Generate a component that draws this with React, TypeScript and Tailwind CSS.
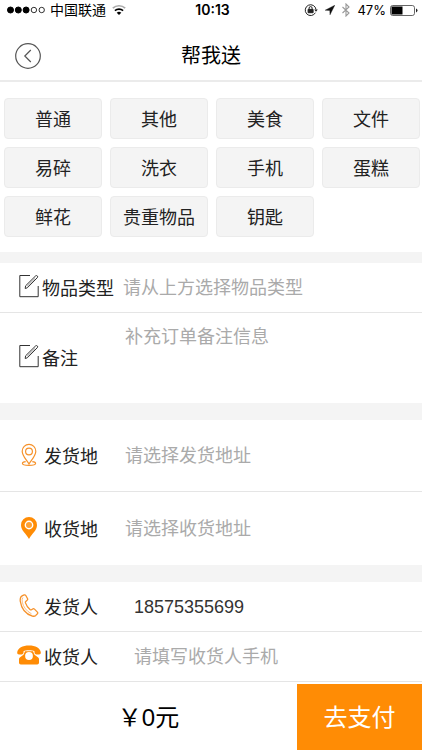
import type { ReactNode } from "react";

const categories = ["普通", "其他", "美食", "文件", "易碎", "洗衣", "手机", "蛋糕", "鲜花", "贵重物品", "钥匙"];

const fieldStyle = "min-w-0 flex-1 bg-transparent text-lg leading-7 text-[#333] outline-none placeholder:text-[#aaa]";

const EditIcon = () => (
    <svg className="mb-1 h-6 w-5 shrink-0" viewBox="0 0 20 24" fill="none" stroke="#333" strokeWidth="1">
        <path d="M11 1.5H.8v21.2h18.4V12" />
        <path d="m6.600 11.800 9.900-9.800q1.100-.9 1.900 0 .7.800-.2 1.800L8.300 13.800l-2.100.7z" />
        <path d="m8.200 12.200 7.900-7.800" strokeWidth=".5" />
    </svg>
);

const PinOutlineIcon = () => (
    <svg className="mb-[2px] h-6 w-5 shrink-0" viewBox="0 0 20 24" fill="none" stroke="#f6922b" strokeWidth="1.2">
        <path d="M10 21C7.500 16.500 3.200 13 3.200 8.200a6.800 6.800 0 0 1 13.600 0C16.800 13 12.500 16.500 10 21z" />
        <circle cx="10" cy="8.500" r="3.400" />
        <path d="M6.700 18.600c-2 .3-3.300.9-3.300 1.700 0 1.200 3 2.100 6.600 2.100s6.600-.9 6.600-2.100c0-.8-1.300-1.400-3.300-1.700" />
    </svg>
);

const PinIcon = () => (
    <svg className="mb-[2px] h-6 w-5 shrink-0" viewBox="0 0 20 24">
        <path fill="#ff8c05" d="M10 1a8 8 0 0 0-8 8c0 5.500 5 8.500 8 14 3-5.500 8-8.500 8-14a8 8 0 0 0-8-8z" />
        <circle cx="10" cy="9" r="3.700" fill="#ffa133" stroke="#fff" strokeWidth="1.400" />
    </svg>
);

const HandsetIcon = () => (
    <svg className="mb-[2px] h-6 w-5 shrink-0" viewBox="0 0 20 24" fill="none" stroke="#f6922b" strokeWidth="1.300" strokeLinejoin="round">
        <path d="M3.500 1.700 5.200.9q1-.3 1.600.6l1.800 3.300q.4.900-.5 1.500L6.800 7.400q-.6.500-.3 1.500 1.300 3.900 4.500 6.700.8.600 1.500.2l1.600-1q.8-.4 1.400.3l2.900 3q.7.800 0 1.600l-1.600 1.700q-1.300 1.200-3.400.7C6.800 20 2.400 14.500 1.300 7.300.9 4.400 1.600 2.600 3.500 1.700z" />
        <path d="M3.900 3.500Q2.700 5 3.300 8.200c1.100 5 4.200 8.900 9.200 11.600" strokeWidth=".6" />
    </svg>
);

const TelephoneIcon = () => (
    <svg className="mb-1 h-5 w-6 shrink-0" viewBox="0 0 24 20">
        <path fill="#ff8c05" d="M12 .5C5.500.5.800 3.200.2 7.300.1 8.700.8 9.500 2 9.500h2.500c1.300 0 2-.8 2-1.900V6.200C8.500 4.900 15.500 4.900 17.500 6.200v1.400c0 1.100.7 1.900 2 1.900H22c1.200 0 1.900-.8 1.800-2.200C23.200 3.200 18.500.5 12 .5z" />
        <path fill="#ff8c05" d="M8 6.200h8l1.500 3.600 3.700 2.600q.8.600.8 1.600v3.700q0 1.800-1.800 1.800H3.800Q2 19.500 2 17.700V14q0-1 .8-1.600l3.700-2.600z" />
        <circle cx="12" cy="11" r="3.900" fill="#fff" />
    </svg>
);

const StatusBar = () => (
    <div className="grid h-5 grid-cols-3 items-center pr-1 pl-[7px] text-black">
        <div className="flex items-center gap-1">
            <svg className="h-2 w-[39px]" viewBox="0 0 39 8" stroke="#000">
                <circle cx="3.500" cy="4" r="3" />
                <circle cx="11.300" cy="4" r="3" />
                <circle cx="19.100" cy="4" r="3" />
                <circle cx="26.900" cy="4" r="2.700" fill="none" strokeWidth=".8" />
                <circle cx="34.700" cy="4" r="2.700" fill="none" strokeWidth=".8" />
            </svg>
            <span className="text-sm leading-5 whitespace-nowrap">中国联通</span>
            <svg className="ml-[2px] h-3 w-[14px]" viewBox="0 0 14 12" fill="none" strokeWidth="1.600">
                <path d="M.8 4.200a9 9 0 0 1 12.400 0" stroke="#aaa" />
                <path d="M2.900 6.700a6 6 0 0 1 8.200 0" stroke="#000" />
                <path d="M4.700 8.700Q7 6.800 9.300 8.700L7 11z" fill="#000" />
            </svg>
        </div>
        <span className="text-center font-[Inter] text-sm leading-5 font-semibold">10:13</span>
        <div className="flex items-center justify-end">
            <svg className="mr-[7px] h-[14px] w-[14px] shrink-0" viewBox="0 0 14 14" fill="none" stroke="#222" strokeWidth="1">
                <path d="M11.400 9.700A5.400 5.400 0 1 1 12 6.500" />
                <path d="M10.200 6.500h3.600L12 8.700z" fill="#222" stroke="none" />
                <path d="M4.100 6.400h5v3.300h-5z" fill="#222" />
                <path d="M5.100 6.300V5q0-1.400 1.500-1.400T8.100 5v1.300" />
            </svg>
            <svg className="mr-[7px] h-[10px] w-[10px] shrink-0" viewBox="0 0 10 10">
                <path d="M9.800.2.200 5.200l4.600.2.200 4.400z" fill="#111" stroke="#111" strokeWidth=".4" />
            </svg>
            <svg className="mr-[7px] h-[14px] w-2 shrink-0" viewBox="0 0 8 14" fill="none" stroke="#999" strokeWidth="1.100">
                <path d="m.5 4 6.500 6L4 13V1l3 3-6.500 6" />
            </svg>
            <span className="font-[Inter] text-[13px] leading-5">47%</span>
            <svg className="ml-1 h-[11px] w-7 shrink-0" viewBox="0 0 28 11">
                <rect x=".5" y=".5" width="24" height="10" rx="2.200" fill="none" stroke="#555" strokeWidth=".9" />
                <path d="M1.500 1.500h11v8h-11z" />
                <path d="M26 3.600q1.500.6 1.500 1.900T26 7.400z" fill="#222" />
            </svg>
        </div>
    </div>
);

const Header = () => (
    <header className="grid h-[62px] grid-cols-[1fr_auto_1fr] items-center border-b-2 border-[#ebebeb] px-[15px] pt-3">
        <button type="button" aria-label="返回" className="justify-self-start">
            <svg className="size-[26px]" viewBox="0 0 26 26" fill="none" stroke="#555" strokeWidth="1.200">
                <circle cx="13" cy="13" r="12.300" />
                <path d="m15.800 7-6 6 6 6" />
            </svg>
        </button>
        <h1 className="text-xl leading-7 text-black">帮我送</h1>
    </header>
);

type FieldRowProps = {
    id: string;
    label: string;
    icon: ReactNode;
    rowStyle: string;
    labelStyle: string;
    children: ReactNode;
};

const FieldRow = ({ id, label, icon, rowStyle, labelStyle, children }: FieldRowProps) => (
    <div className={`flex items-center ${rowStyle}`}>
        <label htmlFor={id} className={`flex shrink-0 items-center text-lg leading-7 whitespace-nowrap text-[#222] ${labelStyle}`}>
            {icon}
            <span className="pt-[2px]">{label}</span>
        </label>
        {children}
    </div>
);

const App = () => {
    return (
        <main className="flex min-h-screen flex-col bg-white font-['Liberation_Sans','Noto_Sans_CJK_SC',sans-serif]">
            <StatusBar />
            <Header />

            <section className="grid grid-cols-4 gap-2 pt-4 pr-[2px] pb-[15px] pl-1">
                {categories.map((name) => (
                    <button key={name} type="button" className="h-[41px] rounded border border-[#ebebeb] bg-[#f4f4f4] pt-[2px] text-lg leading-7 whitespace-nowrap text-[#222]">
                        {name}
                    </button>
                ))}
            </section>

            <form className="flex flex-1 flex-col">
                <section className="border-t-[11px] border-[#f4f4f4]">
                    <FieldRow id="type" label="物品类型" icon={<EditIcon />} rowStyle="h-[50px] border-b border-[#e5e5e5]" labelStyle="w-[123px] gap-[3px] pl-[19px]">
                        <input id="type" className={fieldStyle} placeholder="请从上方选择物品类型" />
                    </FieldRow>
                    <FieldRow id="remark" label="备注" icon={<EditIcon />} rowStyle="h-[90px]" labelStyle="w-[125px] gap-[3px] pl-[19px]">
                        <textarea id="remark" className={`h-[70px] resize-none ${fieldStyle}`} placeholder="补充订单备注信息" />
                    </FieldRow>
                </section>

                <section className="border-t-[17px] border-[#f4f4f4]">
                    <FieldRow id="from" label="发货地" icon={<PinOutlineIcon />} rowStyle="h-[72px] border-b border-[#e5e5e5]" labelStyle="w-[125px] gap-[5px] pl-[19px]">
                        <input id="from" className={fieldStyle} placeholder="请选择发货地址" />
                    </FieldRow>
                    <FieldRow id="to" label="收货地" icon={<PinIcon />} rowStyle="h-[73px]" labelStyle="w-[125px] gap-[5px] pl-[19px]">
                        <input id="to" className={fieldStyle} placeholder="请选择收货地址" />
                    </FieldRow>
                </section>

                <section className="border-t-[17px] border-[#f4f4f4]">
                    <FieldRow id="sender" label="发货人" icon={<HandsetIcon />} rowStyle="h-[50px] border-b border-[#e5e5e5]" labelStyle="w-[134px] gap-[5px] pl-[19px]">
                        <input id="sender" type="tel" className={fieldStyle} defaultValue="18575355699" />
                    </FieldRow>
                    <FieldRow id="receiver" label="收货人" icon={<TelephoneIcon />} rowStyle="h-[50px] border-b border-[#e5e5e5]" labelStyle="w-[134px] gap-[3px] pl-[17px]">
                        <input id="receiver" type="tel" className={fieldStyle} placeholder="请填写收货人手机" />
                    </FieldRow>
                </section>

                <footer className="mt-auto flex h-[66px]">
                    <p className="flex flex-1 items-center justify-center pt-[2px] text-2xl text-black">￥0元</p>
                    <button type="submit" className="w-[125px] bg-[#ff8c05] pt-[2px] text-2xl text-white">
                        去支付
                    </button>
                </footer>
            </form>
        </main>
    );
};

export default App;
